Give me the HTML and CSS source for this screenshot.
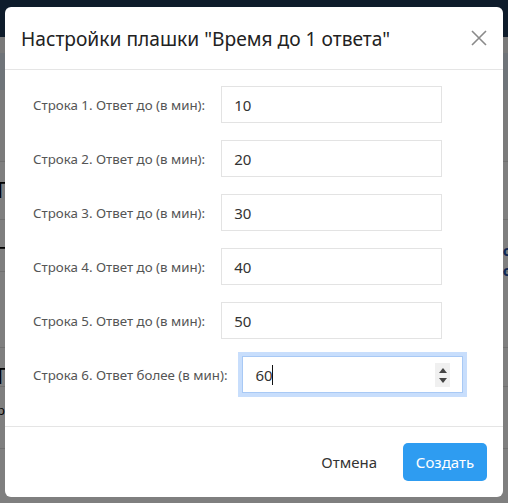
FILE: index.html
```html
<!DOCTYPE html>
<html lang="ru">
<head>
<meta charset="utf-8">
<title>Настройки плашки</title>
<link rel="stylesheet" href="styles.css">
</head>
<body>
<div class="page">
  <div class="topbar"></div>
  <div class="strip"></div>
  <div class="bg-row r1"></div>
  <div class="bg-row r2"><span class="frag">Т</span></div>
  <div class="bg-row r3"><span class="frag">Н</span><span class="frag-r">о<br>о</span></div>
  <div class="bg-row r4"></div>
  <div class="bg-row r5"><span class="frag">Т</span></div>
  <div class="bg-row r6"><span class="frag small">ро</span></div>
</div>
<div class="backdrop"></div>
<div class="modal">
  <div class="modal-header">
    <h5 class="modal-title">Настройки плашки "Время до 1 ответа"</h5>
    <button class="close" type="button" aria-label="Закрыть">
      <svg width="16" height="16" viewBox="0 0 16 16"><path d="M1 1L15 15M15 1L1 15" stroke="#8a8a8a" stroke-width="1.6" fill="none"/></svg>
    </button>
  </div>
  <div class="modal-body">
    <div class="row"><label class="lbl">Строка 1. Ответ до (в мин):</label><input class="inp" type="text" value="10"></div>
    <div class="row"><label class="lbl">Строка 2. Ответ до (в мин):</label><input class="inp" type="text" value="20"></div>
    <div class="row"><label class="lbl">Строка 3. Ответ до (в мин):</label><input class="inp" type="text" value="30"></div>
    <div class="row"><label class="lbl">Строка 4. Ответ до (в мин):</label><input class="inp" type="text" value="40"></div>
    <div class="row"><label class="lbl">Строка 5. Ответ до (в мин):</label><input class="inp" type="text" value="50"></div>
    <div class="row"><label class="lbl">Строка 6. Ответ более (в мин):</label>
      <div class="inp-wrap">
        <input class="inp focused" type="text" value="60">
        <span class="caret"></span>
        <span class="spin"><span class="up"></span><span class="down"></span></span>
      </div>
    </div>
  </div>
  <div class="modal-footer">
    <button class="btn-link" type="button">Отмена</button>
    <button class="btn-primary" type="button">Создать</button>
  </div>
</div>
</body>
</html>
```

FILE: styles.css
```css
* { box-sizing: border-box; }
html, body { margin: 0; padding: 0; }
body {
  width: 508px;
  height: 503px;
  overflow: hidden;
  font-family: "Noto Sans", "Open Sans", sans-serif;
  background: #fff;
  position: relative;
}
.page { width: 508px; height: 503px; }
.topbar { height: 37px; background: #1c3857; }
.strip { height: 53px; background: #dfe9f3; border-top: 16px solid #f2f2f2; }
.bg-row { border-bottom: 1px solid #e0e0e0; position: relative; }
.r1 { height: 72px; background: #f7f7f7; }
.r2 { height: 58px; }
.r3 { height: 52px; }
.r4 { height: 76px; }
.r5 { height: 39px; }
.r6 { height: 62px; }
.frag { position: absolute; left: -6px; top: 12px; font-size: 22px; color: #000; }
.frag.small { font-size: 13px; top: 14px; left: -3px; }
.frag-r { position: absolute; right: -4px; top: 20px; font-size: 15px; line-height: 20px; color: #1d4fa8; font-weight: 700; }
.backdrop { position: absolute; inset: 0; background: rgba(0,0,0,0.5); }

.modal {
  position: absolute;
  left: 5px;
  top: 7px;
  width: 498px;
  height: 490px;
  background: #fff;
  border-radius: 6px;
  display: flex;
  flex-direction: column;
}
.modal-header {
  height: 63px;
  border-bottom: 1px solid #e5e5e5;
  display: flex;
  align-items: center;
  justify-content: space-between;
  padding: 0 16px 0 16px;
}
.modal-title {
  margin: 0;
  font-size: 19.2px;
  font-weight: 400;
  color: #222;
}
.close {
  border: 0;
  background: none;
  padding: 0;
  width: 16px;
  height: 16px;
  display: flex;
}
.modal-body {
  padding: 16px 0 0 28px;
  flex: 1;
}
.row {
  display: flex;
  align-items: center;
  height: 37px;
  margin-bottom: 17px;
}
.lbl {
  font-size: 13.3px;
  color: #555;
  margin-right: 16px;
  white-space: nowrap;
}
.inp {
  width: 221px;
  height: 37px;
  border: 1px solid #e3e3e3;
  padding: 0 12px;
  font-family: inherit;
  font-size: 15px;
  color: #333;
  outline: none;
  background: #fff;
}
.inp-wrap { position: relative; margin-left: -1px; }
.inp.focused {
  border-color: #a8c9f5;
  box-shadow: 0 0 0 4px #c8defc;
}
.caret {
  position: absolute;
  left: 30px;
  top: 9px;
  width: 1px;
  height: 20px;
  background: #111;
}
.spin {
  position: absolute;
  right: 13px;
  top: 7px;
  width: 15px;
  height: 24px;
  background: #f0f0f0;
  display: flex;
  flex-direction: column;
  align-items: center;
  justify-content: center;
  gap: 5px;
}
.up { width: 0; height: 0; border-left: 4px solid transparent; border-right: 4px solid transparent; border-bottom: 5px solid #444; }
.down { width: 0; height: 0; border-left: 4px solid transparent; border-right: 4px solid transparent; border-top: 5px solid #444; }
.modal-footer {
  height: 71px;
  border-top: 1px solid #e5e5e5;
  display: flex;
  justify-content: flex-end;
  align-items: center;
  padding: 0 16px 0 0;
  gap: 16px;
}
.btn-link {
  border: 0;
  background: none;
  font-family: inherit;
  font-size: 15px;
  color: #333;
  padding: 0 10px;
  height: 38px;
}
.btn-primary {
  border: 0;
  background: #2e9cf1;
  color: #fff;
  font-family: inherit;
  font-size: 15px;
  border-radius: 5px;
  width: 84px;
  height: 38px;
  padding: 0;
}
```
